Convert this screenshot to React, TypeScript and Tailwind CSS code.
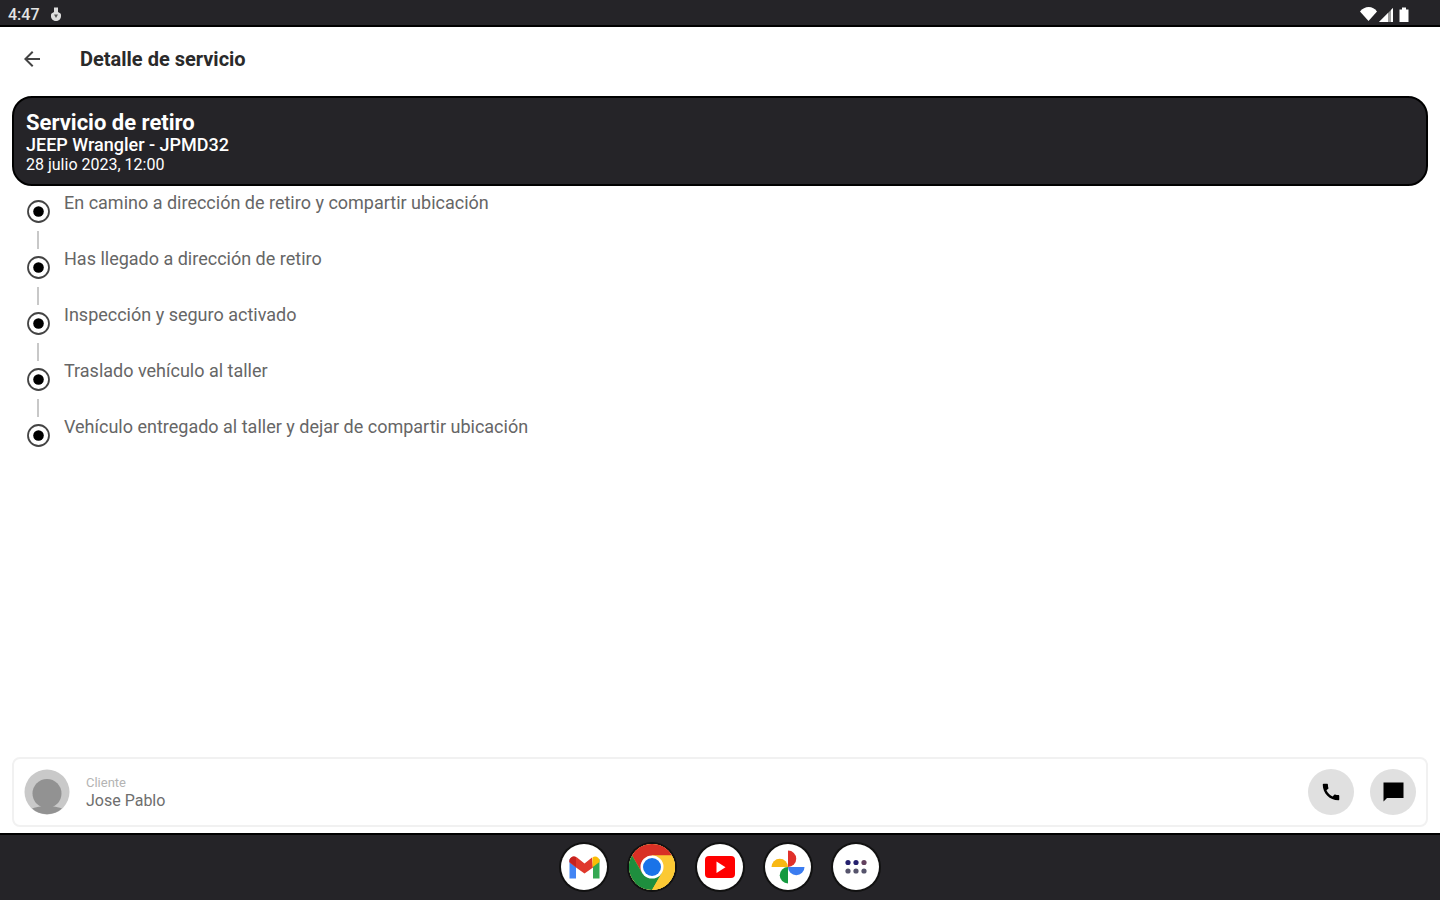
import type { ReactNode } from 'react'
import { MdArrowBack, MdCall } from 'react-icons/md'

const steps = [
  'En camino a dirección de retiro y compartir ubicación',
  'Has llegado a dirección de retiro',
  'Inspección y seguro activado',
  'Traslado vehículo al taller',
  'Vehículo entregado al taller y dejar de compartir ubicación',
]

export default function App() {
  return (
    <div className="flex min-h-screen flex-col bg-white font-['Roboto',sans-serif] text-black">
      <StatusBar />

      {/* App bar */}
      <header className="flex h-[69px] items-center gap-9 px-5 pb-1.5">
        <button type="button" aria-label="Volver" className="flex size-6 items-center justify-center text-[#444]">
          <MdArrowBack className="size-6" />
        </button>
        <h1 className="text-xl font-bold text-[#2a2a2a]">Detalle de servicio</h1>
      </header>

      <main className="flex flex-1 flex-col px-3">
        {/* Service summary */}
        <section className="flex h-[90px] flex-col justify-center rounded-[20px] border-2 border-black bg-[#252428] px-3 pt-1 text-white">
          <h2 className="text-[22px] leading-6 font-bold">Servicio de retiro</h2>
          <p className="text-lg leading-5 font-medium">JEEP Wrangler - JPMD32</p>
          <p className="text-base leading-5">28 julio 2023, 12:00</p>
        </section>

        {/* Progress */}
        <ol className="-mt-px px-3.5">
          {steps.map((label, i) => (
            <Step key={label} label={label} last={i === steps.length - 1} />
          ))}
        </ol>

        {/* Client */}
        <section className="mt-auto mb-1.5 flex h-[70px] items-center rounded-lg border-2 border-[#f1f1f1] px-2.5">
          <Avatar />
          <div className="ml-4 pt-0.5">
            <p className="text-[13px] leading-4 text-[#b4b4b4]">Cliente</p>
            <p className="text-base leading-5 text-[#6e6e6e]">Jose Pablo</p>
          </div>
          <div className="ml-auto flex gap-4">
            <RoundButton label="Llamar">
              <MdCall className="size-[22px]" />
            </RoundButton>
            <RoundButton label="Enviar mensaje">
              <svg viewBox="0 0 24 24" className="size-6" aria-hidden="true">
                <path d="M2.500 2.500h20v15.500H6l-3.500 3.500z" fill="currentColor" />
              </svg>
            </RoundButton>
          </div>
        </section>
      </main>

      <Taskbar />
    </div>
  )
}

function StatusBar() {
  return (
    <div className="flex h-[27px] items-center justify-between border-b-2 border-black bg-[#252428] pr-[27px] pl-2 text-white">
      <div className="flex items-center gap-2.5 pt-1">
        <span className="text-base leading-5 font-medium text-[#e4e4e4]">4:47</span>
        <svg viewBox="0 0 12 16" className="h-4 w-3" aria-hidden="true">
          <path d="M6 .5v5" stroke="#ddd" strokeWidth="4" />
          <path d="M1.500 6.500 4 5h4l2.500 1.500c.8 1 .8 4-.4 5.500C9 13.500 7.500 14 6 14S3 13.500 1.900 12C.7 10.500.7 7.500 1.500 6.500z" fill="#ddd" />
          <path d="M4 7.500h4L6 11z" fill="#555" />
        </svg>
      </div>
      <svg viewBox="0 0 54 18" className="mt-0.5 h-[18px] w-[54px]" aria-hidden="true">
        <path d="M1 6.500C5.500.5 14 .5 18 6.500L9.500 16z" fill="#fff" />
        <path d="M20 17 34 3v14z" fill="#9a9a9a" />
        <path d="M20 17 29 8v9zM32 5l2-2v14h-2z" fill="#fff" />
        <path d="M40.500 4.500H43V2.500h4v2h2.500V17h-9z" fill="#fff" />
      </svg>
    </div>
  )
}

function Step({ label, last }: { label: string; last: boolean }) {
  return (
    <li className="flex gap-3.5 pt-3.5">
      <div className="flex flex-col items-center">
        <svg viewBox="0 0 24 24" className="size-6" aria-hidden="true">
          <circle cx="12.500" cy="12.500" r="10.500" fill="none" stroke="#444" strokeWidth="1.800" />
          <circle cx="12.500" cy="12.500" r="5.300" fill="#000" />
        </svg>
        {last ? null : <span className="mt-2 -mb-2 h-[18px] w-0.5 bg-[#c8c8c8]" />}
      </div>
      <span className="-mt-2 text-lg leading-6 text-[#666]">{label}</span>
    </li>
  )
}

function Avatar() {
  return (
    <svg viewBox="0 0 46 46" className="size-[46px]" role="img" aria-label="Jose Pablo">
      <circle cx="23" cy="23" r="22.500" fill="#c9c9c9" />
      <circle cx="23" cy="24.500" r="14.500" fill="#929292" />
      <path d="M8 39.500c3-1 6-2 9-2h12c3 0 6 1 9 2a22.500 22.500 0 0 1-30 0z" fill="#929292" />
    </svg>
  )
}

function RoundButton({ label, children }: { label: string; children: ReactNode }) {
  return (
    <button
      type="button"
      aria-label={label}
      className="flex size-[46px] items-center justify-center rounded-full bg-[#e0e0e0] text-black"
    >
      {children}
    </button>
  )
}

function Taskbar() {
  return (
    <nav className="flex h-[67px] items-center justify-center gap-[22px] border-t-2 border-black bg-[#252428] pb-0.5">
      <AppButton label="Gmail">
        <path d="M8.500 15v19.500h6.500V20z" fill="#4285f4" />
        <path d="M38.500 15v19.500H32V20z" fill="#34a853" />
        <path d="M8.500 17c0-4 4.500-5.500 7.500-3.500l7.500 6 7.500-6 1 10-8.500 6-8.500-6-6.500-5z" fill="#e0382c" />
        <path d="M8.500 17c0-4 4.500-5.500 6.500-3.800v9.500l-6.500-5z" fill="#c5221f" />
        <path d="M38.500 17c0-4-4.500-5.500-7-3.500v9.700l7-5.200z" fill="#fbbc04" />
      </AppButton>
      <AppButton label="Chrome">
        <circle cx="23" cy="23" r="23" fill="#fcc934" />
        <path d="M3.080 11.500A23 23 0 0 1 42.920 11.500H23L13.040 28.750z" fill="#d93025" />
        <path d="M3.080 11.500A23 23 0 0 0 23 46l9.960-17.250H13.040z" fill="#1e8e3e" />
        <path d="M42.920 11.500A23 23 0 0 1 23 46l9.960-17.250L23 11.500z" fill="#fcc934" />
        <circle cx="23" cy="23" r="11.500" fill="#fff" />
        <circle cx="23" cy="23" r="9" fill="#1a73e8" />
      </AppButton>
      <AppButton label="YouTube">
        <rect x="8" y="12" width="30" height="22" rx="4" fill="#f00" />
        <path d="M19.500 17.500v11.500l9-5.750z" fill="#fff" />
      </AppButton>
      <AppButton label="Fotos">
        <path d="M23 6.500a8.200 8.200 0 0 1 0 16.500z" fill="#e0302a" />
        <path d="M39.500 23a8.200 8.200 0 0 1-16.500 0z" fill="#3b7cf0" />
        <path d="M23 39.500a8.200 8.200 0 0 1 0-16.500z" fill="#149a40" />
        <path d="M6.500 23a8.200 8.200 0 0 1 16.500 0z" fill="#f8b814" />
      </AppButton>
      <AppButton label="Todas las aplicaciones">
        <g fill="#24206e">
          <circle cx="15" cy="18.500" r="2.600" />
          <circle cx="23" cy="18.500" r="2.600" />
          <circle cx="31" cy="18.500" r="2.600" fill="#62405e" />
        </g>
        <g fill="#56546c">
          <circle cx="15" cy="27" r="2.600" />
          <circle cx="23" cy="27" r="2.600" />
          <circle cx="31" cy="27" r="2.600" />
        </g>
      </AppButton>
    </nav>
  )
}

function AppButton({ label, children }: { label: string; children: ReactNode }) {
  return (
    <button type="button" aria-label={label} className="size-[46px] rounded-full bg-white ring-2 ring-[#111]">
      <svg viewBox="0 0 46 46" className="size-full" aria-hidden="true">
        {children}
      </svg>
    </button>
  )
}
